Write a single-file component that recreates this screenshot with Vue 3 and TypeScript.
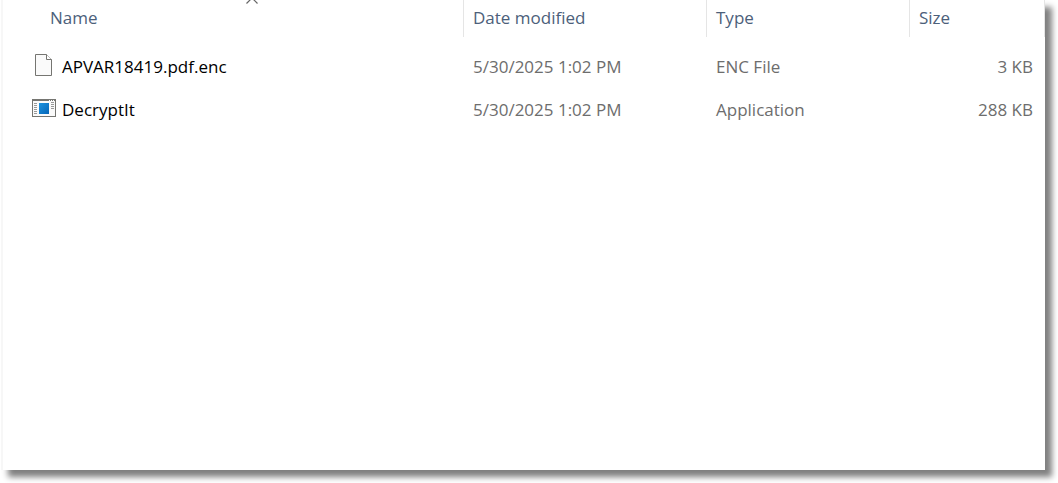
<script setup lang="ts">
interface FileEntry {
  name: string
  modified: string
  type: string
  size: string
  icon: 'document' | 'application'
}

const files: FileEntry[] = [
  { name: 'APVAR18419.pdf.enc', modified: '5/30/2025 1:02 PM', type: 'ENC File', size: '3 KB', icon: 'document' },
  { name: 'DecryptIt', modified: '5/30/2025 1:02 PM', type: 'Application', size: '288 KB', icon: 'application' },
]
</script>

<template>
  <main class="page">
    <section class="panel">
      <table class="files">
        <colgroup>
          <col />
          <col class="col-date" />
          <col class="col-type" />
          <col class="col-size" />
        </colgroup>
        <thead>
          <tr>
            <th class="name" aria-sort="ascending">
              <button type="button">Name</button>
              <svg class="sort" width="14" height="4" viewBox="0 0 14 4" aria-hidden="true">
                <path d="M1.5 3.5 L6 -1 M12.5 3.5 L8 -1" fill="none" stroke="#666" stroke-width="1.2" />
              </svg>
            </th>
            <th><button type="button">Date modified</button></th>
            <th><button type="button">Type</button></th>
            <th class="last"><button type="button">Size</button></th>
          </tr>
        </thead>
        <tbody>
          <tr v-for="file in files" :key="file.name">
            <td class="name">
              <div class="file">
                <svg v-if="file.icon === 'document'" width="24" height="26" viewBox="0 0 24 26" aria-hidden="true">
                  <path d="M3.5 0.5 H14.5 L19.5 5.5 V21.5 H3.5 Z" fill="#fafafa" stroke="#757571" />
                  <path d="M14.5 0.5 V5.5 H19.5" fill="#fff" stroke="#757571" />
                </svg>
                <svg v-else width="24" height="26" viewBox="0 0 24 26" aria-hidden="true">
                  <defs>
                    <linearGradient id="app-fill" x1="0" y1="0" x2="1" y2="1">
                      <stop offset="0" stop-color="#1d93df" />
                      <stop offset="1" stop-color="#0566b8" />
                    </linearGradient>
                  </defs>
                  <rect x="0.5" y="2.5" width="23" height="17" fill="#fafafa" stroke="#757571" />
                  <path d="M0 3 H24" stroke="#757571" stroke-width="2" />
                  <path d="M17 3.5 h1 M19 3.5 h1 M21 3.5 h1" stroke="#fff" />
                  <rect x="7" y="6" width="10" height="11" fill="url(#app-fill)" />
                  <path d="M2 6.5 h3 M2 8.5 h3 M2 10.5 h3 M2 12.5 h3 M2 14.5 h3 M2 16.5 h3 M19 5.5 h3 M19 7.5 h3 M19 9.5 h3 M19 11.5 h3" stroke="#999" />
                </svg>
                <span>{{ file.name }}</span>
              </div>
            </td>
            <td>{{ file.modified }}</td>
            <td>{{ file.type }}</td>
            <td class="size">{{ file.size }}</td>
          </tr>
        </tbody>
      </table>
    </section>
  </main>
</template>

<style>
body {
  background: #fff;
}
</style>

<style scoped>
.page {
  box-sizing: border-box;
  display: flex;
  min-height: 100vh;
  padding: 0 13px 13px 1px;
  overflow: hidden;
  font: 17px/24px "Open Sans", "Noto Sans", sans-serif;
}
.panel {
  flex: 1;
  border-left: 2px solid #f7f7f7;
  background: #fff;
  box-shadow: 7px 7px 6px #808080;
}
.files {
  width: 100%;
  table-layout: fixed;
  border-collapse: separate;
  border-spacing: 0;
}
.col-date {
  width: 243px;
}
.col-type {
  width: 203px;
}
.col-size {
  width: 136px;
}
th {
  position: relative;
  height: 37px;
  padding: 0;
  border-left: 1px solid #e5e5e5;
  text-align: left;
  vertical-align: top;
}
th.name {
  border-left: 0;
}
th.last {
  border-right: 1px solid #e5e5e5;
}
button {
  display: block;
  width: 100%;
  padding: 6px 9px;
  border: 0;
  background: none;
  color: #4c607a;
  font: inherit;
  font-weight: 400;
  text-align: left;
}
th.name button {
  padding-left: 47px;
}
.sort {
  position: absolute;
  top: 0;
  left: 50%;
  margin-left: 12px;
}
tbody::before {
  content: "";
  display: table-row;
  height: 8px;
}
td {
  height: 43px;
  padding: 0 10px;
  color: #6d6d6d;
  white-space: nowrap;
}
td.name {
  padding: 0 0 0 29px;
  color: #000;
}
td.size {
  padding-right: 12px;
  text-align: right;
}
.file {
  display: flex;
  align-items: center;
  gap: 6px;
}
</style>
